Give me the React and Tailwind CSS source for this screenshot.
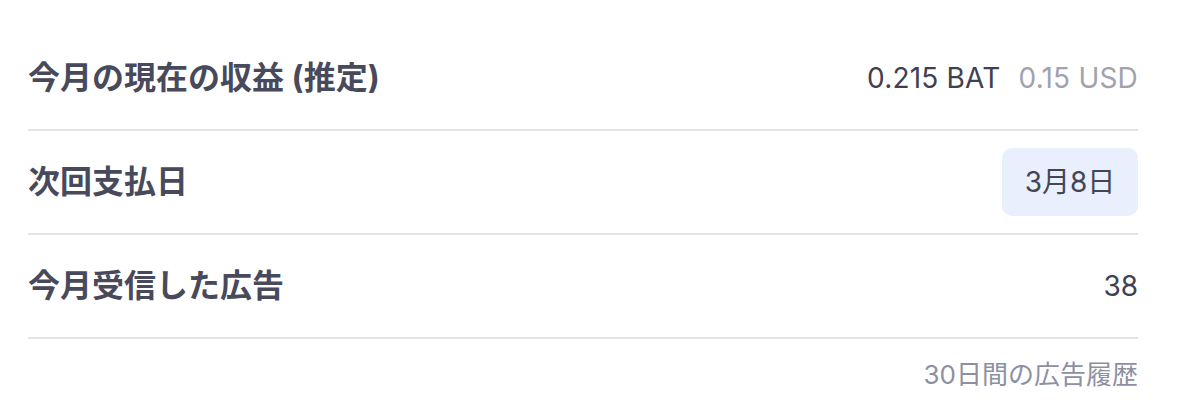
import React from 'react';

const rows = [
  { label: '今月の現在の収益 (推定)', kind: 'earnings' },
  { label: '次回支払日', kind: 'date' },
  { label: '今月受信した広告', kind: 'count' },
];

function Value({ kind }) {
  if (kind === 'earnings') {
    return (
      <div className="flex items-baseline gap-[18px] text-[28px] tracking-[0.2px]">
        <span className="text-[#3f4152]">0.215 BAT</span>
        <span className="text-[#a1a2ae]">0.15 USD</span>
      </div>
    );
  }
  if (kind === 'date') {
    return (
      <div className="flex h-[68px] w-[136px] items-center justify-center rounded-[10px] bg-[#e9effc] text-[28px] text-[#434557]">
        3月8日
      </div>
    );
  }
  return <span className="text-[28px] text-[#3f4152]">38</span>;
}

export default function App() {
  return (
    <div className="min-h-[416px] bg-white pl-[28px] pr-[46px] pt-[27px] font-['Inter','Noto_Sans_CJK_JP',sans-serif]">
      {rows.map((row) => (
        <div
          key={row.kind}
          className="flex h-[104px] items-center justify-between border-b-2 border-[#e4e3ea]"
        >
          <span className="text-[32px] font-bold leading-none text-[#484a5c]">{row.label}</span>
          <Value kind={row.kind} />
        </div>
      ))}
      <div className="flex justify-end pt-[16px] text-[26px] text-[#8d90a3]">
        30日間の広告履歴
      </div>
    </div>
  );
}
